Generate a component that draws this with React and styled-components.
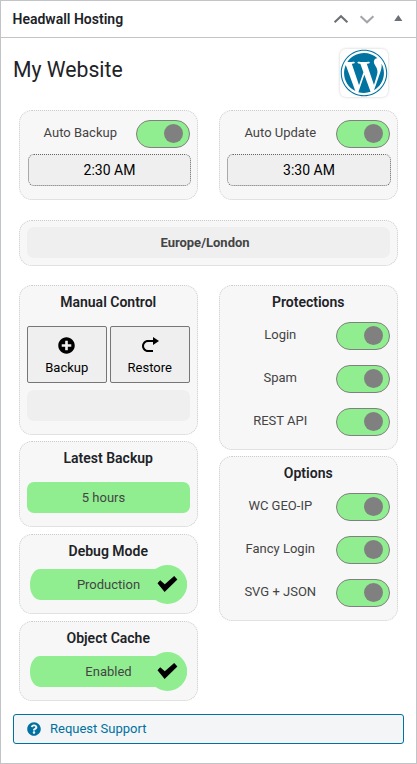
import React, { useState } from 'react';
import styled, { createGlobalStyle } from 'styled-components';
import { FaPlusCircle, FaQuestionCircle, FaWordpress } from 'react-icons/fa';

const GlobalStyle = createGlobalStyle`
  * {
    box-sizing: border-box;
  }

  body {
    margin: 0;
    background: #fff;
    color: #1d2327;
    font-family: Roboto, 'Liberation Sans', sans-serif;
    font-size: 13px;
  }

  button {
    font-family: inherit;
    padding: 0;
    cursor: pointer;
  }
`;

const Postbox = styled.div`
  width: 417px;
  height: 764px;
  border: 1px solid #c3c4c7;
  background: #fff;
`;

const Header = styled.div`
  display: flex;
  align-items: center;
  justify-content: space-between;
  height: 37px;
  padding: 0 13px 1px 11.5px;
  border-bottom: 1px solid #c3c4c7;
`;

const HeaderTitle = styled.h2`
  margin: 0;
  font-size: 14px;
  font-weight: 600;
`;

const Actions = styled.div`
  display: flex;
  align-items: center;

  svg {
    display: block;
  }
`;

const Inside = styled.div`
  padding: 11px 12px 0;
`;

const SiteRow = styled.div`
  display: flex;
  justify-content: space-between;
  height: 49px;
  padding-right: 16px;
`;

const SiteName = styled.h1`
  margin: 6.5px 0 0;
  font-size: 21.2px;
  line-height: 28px;
  font-weight: 400;
`;

const Logo = styled.div`
  display: flex;
  align-items: center;
  justify-content: center;
  width: 48px;
  height: 48px;
  border-radius: 6px;
  box-shadow: 0 0 3px rgba(0, 0, 0, 0.2);
  color: #0073a0;
`;

const Grid = styled.div`
  display: grid;
  grid-template-columns: 179px 179px;
  column-gap: 21px;
  margin: 12px 0 0 6px;
  align-items: start;
`;

const Column = styled.div`
  display: flex;
  flex-direction: column;
  gap: ${(props) => props.$gap};
  margin-top: 19px;
`;

const Card = styled.div`
  height: ${(props) => props.$height};
  padding: ${(props) => props.$padding || '0 7px'};
  border: 1px dotted #ccc;
  border-radius: 13px;
  background: #f7f7f7;
`;

const WideCard = styled(Card)`
  grid-column: 1 / -1;
  margin-top: 20px;
`;

const ManualCard = styled(Card)`
  margin-bottom: -1px;
`;

const CardTitle = styled.h3`
  margin: 0;
  padding: 7px 0.5px 0 0;
  font-size: 14px;
  line-height: 18px;
  font-weight: 600;
  text-align: center;
`;

const ToggleRow = styled.div`
  display: flex;
  align-items: center;
  height: 28px;
  color: #444;
`;

const ToggleLabel = styled.span`
  width: 106.5px;
  margin-right: 2.5px;
  padding-bottom: 3px;
  text-align: center;
`;

const ToggleList = styled.div`
  display: flex;
  flex-direction: column;
  gap: 15px;
  margin-top: 11px;
`;

const Switch = styled.button`
  display: flex;
  align-items: center;
  justify-content: ${(props) => (props.$on ? 'flex-end' : 'flex-start')};
  width: 54px;
  height: 28px;
  padding: 0 6px 1px;
  border: 1px solid #808080;
  border-radius: 14px;
  background: ${(props) => (props.$on ? '#90ee90' : '#ddd')};
`;

const Knob = styled.span`
  width: 19px;
  height: 19px;
  border-radius: 50%;
  background: #808080;
`;

const TimeButton = styled.button`
  display: block;
  width: ${(props) => (props.$wide ? '164px' : '163px')};
  height: 32px;
  margin: 6px 0 0 ${(props) => (props.$wide ? '0' : '1px')};
  border: 1px dotted #666;
  border-radius: 6px;
  background: #efefef;
  color: #000;
  font-size: 14px;
`;

const StatusBar = styled.div`
  height: 31px;
  border-radius: 7px;
  background: ${(props) => (props.$good ? '#90ee90' : '#efefef')};
  color: #444;
  line-height: 31px;
  text-align: center;
`;

const ZoneBar = styled(StatusBar)`
  padding-right: 7px;
  font-weight: 700;
`;

const LatestBar = styled(StatusBar)`
  margin-top: 15px;
  padding-right: 10px;
`;

const ButtonRow = styled.div`
  display: flex;
  gap: 3px;
  margin: 15px 0 7px;
`;

const ControlButton = styled.button`
  display: flex;
  flex-direction: column;
  align-items: center;
  width: 80px;
  height: 57px;
  padding: 8px 0.5px 0 0;
  border: 1px solid #767676;
  border-radius: 2px;
  background: #efefef;
  color: #000;
  font-size: 13px;
  line-height: 16px;
`;

const IconSlot = styled.span`
  display: flex;
  align-items: center;
  justify-content: center;
  height: 20px;
  margin-bottom: 5px;
`;

const Pill = styled.div`
  display: flex;
  align-items: center;
  height: 31px;
  width: 157px;
  margin: 9px 0 0 3px;
  border-radius: 10px 15px 15px 10px / 15px;
  background: #90ee90;
  color: #444;
`;

const PillText = styled.span`
  width: 118px;
  padding-left: 39px;
  text-align: center;
  white-space: nowrap;
`;

const PillBadge = styled.span`
  display: flex;
  align-items: center;
  justify-content: center;
  flex: none;
  width: 39px;
  height: 39px;
  border-radius: 50%;
  background: #90ee90;
`;

const Support = styled.a`
  display: flex;
  align-items: center;
  height: 30px;
  margin-top: 13px;
  padding: 0 0 1px 12.5px;
  gap: 9.5px;
  width: 391px;
  border: 1px solid #0071a1;
  border-radius: 3px;
  background: #f3f5f6;
  color: #0071a1;
  text-decoration: none;
  cursor: pointer;
`;

const RedoIcon = () => (
  <svg width="20" height="20" viewBox="0 0 20 20" fill="currentColor">
    <path d="M8 5h5V2l6 4-6 4V7H8c-2.2 0-4 1.8-4 4s1.8 4 4 4h5v2H8c-3.3 0-6-2.7-6-6s2.7-6 6-6z" />
  </svg>
);

const CheckIcon = () => (
  <svg width="21" height="17" viewBox="0 0 21 17">
    <path d="M.5 7.3 3.2 4.2l4.6 4L17.2 0l3.2 3.6L7.6 16z" fill="#000" />
  </svg>
);

const Toggle = ({ label }) => {
  const [on, setOn] = useState(true);

  return (
    <ToggleRow>
      <ToggleLabel>{label}</ToggleLabel>
      <Switch $on={on} aria-label={label} aria-pressed={on} onClick={() => setOn(!on)}>
        <Knob />
      </Switch>
    </ToggleRow>
  );
};

const Schedule = ({ label, time, wide }) => (
  <Card $height="90px" $padding="9px 7px 0">
    <Toggle label={label} />
    <TimeButton $wide={wide}>{time}</TimeButton>
  </Card>
);

const ToggleCard = ({ title, items }) => (
  <Card $height="165px">
    <CardTitle>{title}</CardTitle>
    <ToggleList>
      {items.map((item) => (
        <Toggle key={item} label={item} />
      ))}
    </ToggleList>
  </Card>
);

const StateCard = ({ title, value }) => (
  <Card $height="80px">
    <CardTitle>{title}</CardTitle>
    <Pill>
      <PillText>{value}</PillText>
      <PillBadge>
        <CheckIcon />
      </PillBadge>
    </Pill>
  </Card>
);

const App = () => {
  return (
    <Postbox>
      <GlobalStyle />
      <Header>
        <HeaderTitle>Headwall Hosting</HeaderTitle>
        <Actions>
          <svg width="70" height="12" viewBox="0 0 70 12">
            <path d="M1.6 9.2 8 3.2l6.4 6" fill="none" stroke="#6c7075" strokeWidth="2.1" />
            <path d="M27.6 3.2 34 9.2l6.4-6" fill="none" stroke="#a2a5a9" strokeWidth="2.1" />
            <path d="M61.2 8 65.3 2l4.1 6z" fill="#6c7075" />
          </svg>
        </Actions>
      </Header>
      <Inside>
        <SiteRow>
          <SiteName>My Website</SiteName>
          <Logo>
            <FaWordpress size={48} />
          </Logo>
        </SiteRow>
        <Grid>
          <Schedule label="Auto Backup" time="2:30 AM" />
          <Schedule label="Auto Update" time="3:30 AM" wide />
          <WideCard $height="46px" $padding="6px 7px 0">
            <ZoneBar>Europe/London</ZoneBar>
          </WideCard>
          <Column $gap="7px">
            <ManualCard $height="150px">
              <CardTitle>Manual Control</CardTitle>
              <ButtonRow>
                <ControlButton>
                  <IconSlot>
                    <FaPlusCircle size={17} />
                  </IconSlot>
                  Backup
                </ControlButton>
                <ControlButton>
                  <IconSlot>
                    <RedoIcon />
                  </IconSlot>
                  Restore
                </ControlButton>
              </ButtonRow>
              <StatusBar />
            </ManualCard>
            <Card $height="86px">
              <CardTitle>Latest Backup</CardTitle>
              <LatestBar $good>5 hours</LatestBar>
            </Card>
            <StateCard title="Debug Mode" value="Production" />
            <StateCard title="Object Cache" value="Enabled" />
          </Column>
          <Column $gap="6px">
            <ToggleCard title="Protections" items={['Login', 'Spam', 'REST API']} />
            <ToggleCard title="Options" items={['WC GEO-IP', 'Fancy Login', 'SVG + JSON']} />
          </Column>
        </Grid>
        <Support>
          <FaQuestionCircle size={14} />
          Request Support
        </Support>
      </Inside>
    </Postbox>
  );
};

export default App;
